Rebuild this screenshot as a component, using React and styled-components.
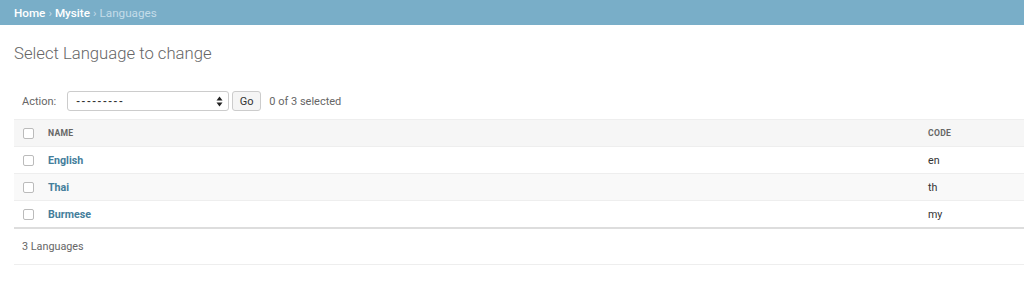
import React from 'react';
import styled, { createGlobalStyle } from 'styled-components';

const GlobalStyle = createGlobalStyle`
  html, body {
    margin: 0;
    padding: 0;
    background: #fff;
    font-family: Roboto, "Lucida Grande", Verdana, Arial, sans-serif;
    color: #333;
  }
`;

const Page = styled.div`
  width: 1024px;
  height: 290px;
  overflow: hidden;
`;

const Breadcrumbs = styled.div`
  background: #79aec8;
  height: 25px;
  padding: 0 14px;
  display: flex;
  align-items: center;
  font-size: 11.7px;
  color: #c4dce8;
`;

const Crumb = styled.a`
  color: #fff;
  text-decoration: none;
  font-weight: 500;
`;

const Sep = styled.span`
  margin: 0 3px;
  color: #c4dce8;
`;

const Content = styled.div`
  padding: 0 0 0 14px;
`;

const Title = styled.h1`
  margin: 19px 0 0;
  font-size: 16.7px;
  font-weight: 300;
  color: #666;
  line-height: 20px;
`;

const Actions = styled.div`
  display: flex;
  align-items: center;
  height: 22px;
  margin-top: 26px;
  padding-left: 8px;
  font-size: 11px;
  color: #666;
`;

const Label = styled.span`
  margin-right: 11px;
`;

const Select = styled.div`
  width: 162px;
  height: 20px;
  box-sizing: border-box;
  border: 1px solid #ccc;
  border-radius: 3px;
  display: flex;
  align-items: center;
  justify-content: space-between;
  padding: 0 5px 0 8px;
  color: #333;
  font-size: 11px;
  font-weight: 500;
  letter-spacing: 1.6px;
`;

const Go = styled.button`
  margin-left: 3px;
  height: 20px;
  width: 29px;
  box-sizing: border-box;
  border: 1px solid #ccc;
  border-radius: 3px;
  background: #f5f5f5;
  font-family: inherit;
  font-size: 11px;
  color: #333;
  padding: 0;
`;

const Counter = styled.span`
  margin-left: 8px;
  color: #666;
`;

const Table = styled.div`
  margin-top: 7px;
  border-top: 1px solid #eee;
`;

const Row = styled.div`
  display: grid;
  grid-template-columns: 34px 880px 1fr;
  align-items: center;
  height: ${p => p.$last ? '28px' : '27px'};
  box-sizing: border-box;
  background: ${p => p.$bg || '#fff'};
  border-bottom: ${p => p.$last ? '2px solid #ddd' : '1px solid #eee'};
  font-size: 10.7px;
`;

const Box = styled.span`
  width: 9px;
  height: 9px;
  margin-left: 9px;
  border: 1px solid #bbb;
  border-radius: 2px;
  background: #fff;
`;

const Head = styled.span`
  font-size: 8.6px;
  font-weight: 700;
  color: #666;
  text-transform: uppercase;
  letter-spacing: 0.3px;
`;

const Name = styled.a`
  color: #447e9b;
  font-weight: 700;
  text-decoration: none;
`;

const Code = styled.span`
  color: #333;
`;

const Paginator = styled.div`
  height: 35px;
  display: flex;
  align-items: center;
  padding-left: 8px;
  font-size: 10.8px;
  color: #666;
  border-bottom: 1px solid #eee;
`;

const languages = [
  { name: 'English', code: 'en' },
  { name: 'Thai', code: 'th' },
  { name: 'Burmese', code: 'my' },
];

export default function App() {
  return (
    <Page>
      <GlobalStyle />
      <Breadcrumbs>
        <Crumb>Home</Crumb>
        <Sep>›</Sep>
        <Crumb>Mysite</Crumb>
        <Sep>›</Sep>
        <span>Languages</span>
      </Breadcrumbs>
      <Content>
        <Title>Select Language to change</Title>
        <Actions>
          <Label>Action:</Label>
          <Select>
            <span>---------</span>
            <svg width="7" height="11" viewBox="0 0 7 11">
              <path d="M3.5 0.5 L6.5 4.5 H0.5 Z" fill="#222" />
              <path d="M3.5 10.5 L6.5 6.5 H0.5 Z" fill="#222" />
            </svg>
          </Select>
          <Go>Go</Go>
          <Counter>0 of 3 selected</Counter>
        </Actions>
        <Table>
          <Row $bg="#f6f6f6">
            <Box />
            <Head>Name</Head>
            <Head>Code</Head>
          </Row>
          {languages.map((l, i) => (
            <Row key={l.code} $bg={i % 2 === 1 ? '#f9f9f9' : '#fff'} $last={i === languages.length - 1}>
              <Box />
              <Name>{l.name}</Name>
              <Code>{l.code}</Code>
            </Row>
          ))}
        </Table>
        <Paginator>3 Languages</Paginator>
      </Content>
    </Page>
  );
}
